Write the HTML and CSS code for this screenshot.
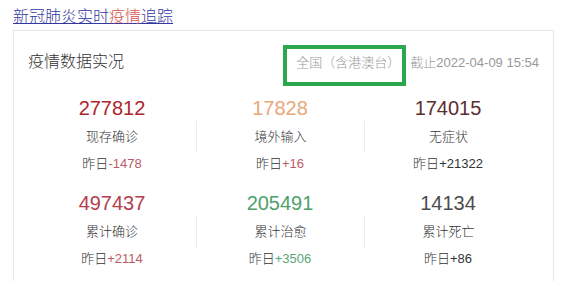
FILE: index.html
```html
<!DOCTYPE html>
<html lang="zh-CN">
<head>
    <meta charset="UTF-8">
    <meta name="viewport" content="width=device-width, initial-scale=1.0">
    <title>新冠肺炎实时疫情追踪</title>
    <link rel="stylesheet" href="styles.css">
</head>
<body>

    <!-- Title link -->
    <div class="top">
        <a class="top-link" href="#">新冠肺炎实时<em>疫情</em>追踪</a>
    </div>

    <!-- Data card -->
    <div class="card">
        <div class="card-head">
            <h2>疫情数据实况</h2>
            <div class="head-right">
                <span class="region">全国（含港澳台）</span>
                <span class="date">截止2022-04-09 15:54</span>
            </div>
        </div>

        <div class="stats">
            <div class="stat">
                <div class="num c-red">277812</div>
                <div class="label">现存确诊</div>
                <div class="delta">昨日<span class="d-red">-1478</span></div>
            </div>
            <div class="stat">
                <div class="num c-orange">17828</div>
                <div class="label">境外输入</div>
                <div class="delta">昨日<span class="d-red">+16</span></div>
            </div>
            <div class="stat">
                <div class="num c-brown">174015</div>
                <div class="label">无症状</div>
                <div class="delta">昨日<span>+21322</span></div>
            </div>
            <div class="stat">
                <div class="num c-pink">497437</div>
                <div class="label">累计确诊</div>
                <div class="delta">昨日<span class="d-red">+2114</span></div>
            </div>
            <div class="stat">
                <div class="num c-green">205491</div>
                <div class="label">累计治愈</div>
                <div class="delta">昨日<span class="d-green">+3506</span></div>
            </div>
            <div class="stat">
                <div class="num c-gray">14134</div>
                <div class="label">累计死亡</div>
                <div class="delta">昨日<span>+86</span></div>
            </div>
        </div>
    </div>

</body>
</html>
```

FILE: styles.css
```css
body {
    font-family: "Liberation Sans", "Noto Sans CJK SC", sans-serif;
    font-weight: 300;
    margin: 0;
    padding: 0 18px 0 13px;
    background-color: #fff;
    color: #333;
}
.top {
    padding-top: 7px;
    height: 23px;
}
.top-link {
    font-size: 16px;
    line-height: 20px;
    color: #33379f;
    text-decoration: underline;
}
.top-link em {
    font-style: normal;
    color: #d9544f;
}
.card {
    border: 1px solid #e6e6e6;
    border-bottom: none;
    padding: 14px 14px 0 14px;
    height: 236px;
}
.card-head {
    display: flex;
    justify-content: space-between;
    align-items: flex-start;
    height: 41px;
}
.card-head h2 {
    margin: 0;
    font-size: 16px;
    font-weight: 300;
    line-height: 34px;
    color: #333;
}
.head-right {
    display: flex;
    align-items: flex-start;
    font-size: 13px;
    color: #999;
}
.region {
    border: 4px solid #2ca84c;
    padding: 0 2px 5px 9px;
    line-height: 28px;
    margin-right: 4px;
}
.date {
    line-height: 36px;
}
.stats {
    display: grid;
    grid-template-columns: repeat(3, 168px);
    row-gap: 17px;
    margin-top: 10px;
    text-align: center;
}
.num {
    font-size: 20px;
    line-height: 24px;
}
.label {
    font-size: 13px;
    line-height: 20px;
    padding: 6px 0;
    margin-top: 1px;
}
.stat:nth-child(3n+2) .label,
.stat:nth-child(3n+3) .label {
    border-left: 1px solid #ececec;
}
.delta {
    font-size: 13px;
    line-height: 20px;
    margin-top: 1px;
    color: #333;
}
.c-red { color: #ad262c; }
.c-orange { color: #e8a77b; }
.c-brown { color: #5c2c31; }
.c-pink { color: #b3404e; }
.c-green { color: #4f9f6d; }
.c-gray { color: #4d4d4d; }
.d-red { color: #bd5a66; }
.d-green { color: #5ba679; }
```
